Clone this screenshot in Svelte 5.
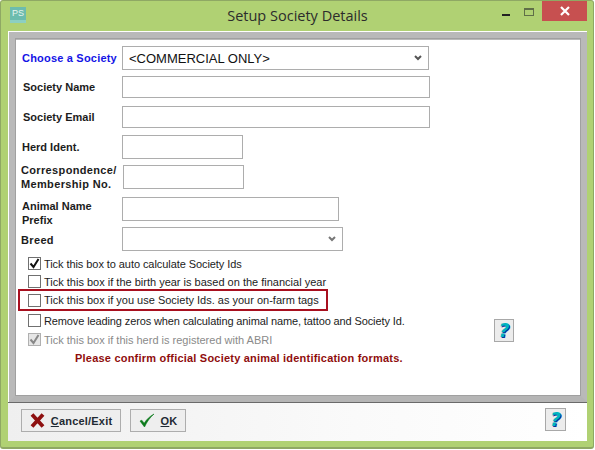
<script>
  // top = gap above the row, shift = nudge for the label, wide = letter spacing of long labels
  const rows = [
    { label: 'Society Name', width: 308, left: 0, top: 6, h: 22 },
    { label: 'Society Email', width: 308, left: 0, top: 8, h: 22, drop: -1 },
    { label: 'Herd Ident.', width: 121, left: 0, top: 7, h: 24, shift: -1 },
    { label: 'Correspondence/ Membership No.', width: 121, left: 1, top: 6, h: 24, shift: -2, wide: true },
    { label: 'Animal Name Prefix', width: 217, left: 0, top: 8, h: 24, shift: -1, drop: 8 }
  ];

  const checks = [
    { text: 'Tick this box to auto calculate Society Ids', on: true, tight: true },
    { text: 'Tick this box if the birth year is based on the financial year' },
    { text: 'Tick this box if you use Society Ids. as your on-farm tags', marked: true },
    { text: 'Remove leading zeros when calculating animal name, tattoo and Society Id.', snug: true },
    { text: 'Tick this box if this herd is registered with ABRI', on: true, off: true }
  ];
</script>

<div class="screen">
  <div class="window">
    <header class="titlebar">
      <div class="app-icon">PS</div>
      <div class="title">Setup Society Details</div>
      <div class="controls">
        <span class="min"></span>
        <span class="max"></span>
        <span class="close">
          <svg width="10" height="10" viewBox="0 0 10 10"><path d="M1 1l8 8M9 1l-8 8" stroke="#fff" stroke-width="2.2" fill="none" /></svg>
        </span>
      </div>
    </header>

    <div class="client">
      <main class="panel">
        <div class="row">
          <div class="label choose">Choose a Society</div>
          <div class="field select wide">
            <span>&lt;COMMERCIAL ONLY&gt;</span>
            <svg width="8" height="6" viewBox="0 0 8 6"><path d="M1 1l3 3 3-3" stroke="#555" stroke-width="2" fill="none" /></svg>
          </div>
        </div>

        {#each rows as r}
          <div class="row" style="margin-top: {r.top}px; height: {r.h}px">
            <div class="label" class:spaced={r.wide} style="margin-left: {r.shift ?? 0}px; margin-top: {r.drop ?? 0}px">{r.label}</div>
            <div class="field" style="width: {r.width}px; height: {r.h}px; margin-left: {r.left - (r.shift ?? 0)}px"></div>
          </div>
        {/each}

        <div class="row breed">
          <div class="label spaced breed-label">Breed</div>
          <div class="field select short">
            <span></span>
            <svg width="8" height="6" viewBox="0 0 8 6"><path d="M1 1l3 3 3-3" stroke="#777" stroke-width="2" fill="none" /></svg>
          </div>
        </div>

        <div class="lower">
          <div class="checks">
            {#each checks as c}
              <div class="check" class:marked={c.marked} class:off={c.off} class:snug={c.snug} class:tight={c.tight}>
                <span class="box">
                  {#if c.on}
                    <svg width="11" height="11" viewBox="0 0 11 11"><path d="M1.5 5.500l3 3.500 5-8" stroke={c.off ? '#888' : '#111'} stroke-width="2" fill="none" /></svg>
                  {/if}
                </span>
                <span>{c.text}</span>
              </div>
            {/each}
          </div>
          <div class="help panel-help">?</div>
        </div>

        <p class="notice">Please confirm official Society animal identification formats.</p>
      </main>

      <footer class="footer">
        <button class="btn cancel">
          <svg width="15" height="15" viewBox="0 0 15 15"><path d="M2 1.500l11 12M13 1.500l-11 12" stroke="#8e1010" stroke-width="3.800" fill="none" /></svg>
          <span><u>C</u>ancel/Exit</span>
        </button>
        <button class="btn ok">
          <svg width="16" height="15" viewBox="0 0 16 15"><path d="M1 8l1.800-.8 2.400 3C7.500 6.500 10.500 3.500 15 1 11 4.500 8 8.500 5.500 14z" fill="#0c7a1c" stroke="#0c7a1c" stroke-width="0.6" /></svg>
          <span><u>O</u>K</span>
        </button>
        <div class="help foot-help">?</div>
      </footer>
    </div>
  </div>
</div>

<style>
  :global(body) {
    margin: 0;
    background: #fff;
    overflow: hidden;
  }

  * {
    box-sizing: border-box;
  }

  .screen {
    width: 595px;
    height: 450px;
    font-family: "Liberation Sans", Arial, sans-serif;
  }

  .window {
    width: 594px;
    height: 449px;
    background: #b0d173;
    border: 1px solid #8fa864;
    border-bottom-width: 2px;
    border-radius: 3px;
    padding: 0 6px 6px 7px;
    display: flex;
    flex-direction: column;
  }

  .titlebar {
    height: 30px;
    flex: none;
    display: flex;
    align-items: flex-start;
    position: relative;
  }

  .app-icon {
    width: 16px;
    height: 16px;
    margin: 6px 0 0 2px;
    background: #6cbcae;
    color: #e6f4ee;
    font-size: 9px;
    line-height: 12px;
    text-align: center;
    border-bottom: 3px solid #8ccfc2;
  }

  .title {
    position: absolute;
    left: 0;
    right: 0;
    top: 5px;
    text-align: center;
    font-family: "Open Sans", sans-serif;
    font-size: 14.500px;
    line-height: 20px;
    color: #2c2c2c;
  }

  .controls {
    margin-left: auto;
    display: flex;
    align-items: flex-start;
    position: relative;
  }

  .min {
    width: 8px;
    height: 2px;
    background: #222;
    margin: 13px 14px 0 0;
  }

  .max {
    width: 10px;
    height: 8px;
    border: 1px solid #5f6f48;
    border-top-width: 2px;
    margin: 7px 8px 0 0;
  }

  .close {
    width: 45px;
    height: 20px;
    background: #c75050;
    display: flex;
    align-items: center;
    justify-content: center;
  }

  .client {
    flex: 1;
    min-height: 0;
    display: flex;
    flex-direction: column;
    background: #fff;
    border-top: 1px solid #fff;
  }

  .panel {
    height: 370px;
    flex: none;
    margin-left: 1px;
    background: #fff;
    border: 6px solid #b9b9b9;
    border-top-width: 8px;
    border-bottom-color: #b5b5b5;
    outline: 1px solid #a0a0a0;
    outline-offset: -7px;
    padding: 6px 8px 0 7px;
  }

  .row {
    display: flex;
    align-items: center;
  }

  .label {
    width: 100px;
    flex: none;
    padding-left: 1px;
    font-size: 11px;
    font-weight: 700;
    line-height: 14px;
    color: #1c1c1c;
  }

  .spaced {
    letter-spacing: 0.35px;
  }

  .choose {
    color: #1414e6;
    letter-spacing: 0.2px;
    margin-left: -1px;
    margin-right: 1px;
    margin-top: -1px;
    white-space: nowrap;
  }

  .field {
    background: #fff;
    border: 1px solid #adadad;
  }

  .select {
    height: 24px;
    display: flex;
    align-items: center;
    justify-content: space-between;
    padding: 0 6px 0 6px;
    font-size: 13px;
    color: #111;
  }

  .wide {
    width: 307px;
  }

  .short {
    width: 221px;
  }

  .breed {
    margin-top: 6px;
  }

  .breed-label {
    margin-left: -2px;
    margin-right: 2px;
    margin-top: 1px;
  }

  .lower {
    display: flex;
    margin-top: 6px;
  }

  .checks {
    width: 472px;
  }

  .check {
    display: flex;
    align-items: center;
    gap: 3px;
    height: 13px;
    margin: 0 0 5px 6px;
    font-size: 11px;
    color: #1c1c1c;
    white-space: nowrap;
  }

  .check.marked {
    height: 22px;
    width: 310px;
    margin: -4px 0 3px -4px;
    padding-left: 8px;
    border: 2px solid #a8101f;
  }

  .check.snug {
    letter-spacing: -0.12px;
    margin-bottom: 6px;
  }

  .check.tight {
    letter-spacing: -0.07px;
  }

  .check.off {
    color: #8a8a8a;
  }

  .box {
    width: 13px;
    height: 13px;
    flex: none;
    background: #fff;
    border: 1px solid #707070;
    display: flex;
    align-items: center;
    justify-content: center;
  }

  .off .box {
    background: #e6e6e6;
    border-color: #b0b0b0;
  }

  .help {
    width: 20px;
    height: 23px;
    flex: none;
    background: #ececec;
    border: 1px solid #a8a8a8;
    font-family: "DejaVu Sans", sans-serif;
    font-size: 19px;
    font-weight: 700;
    font-style: italic;
    line-height: 21px;
    text-align: center;
    color: #00b4c0;
    text-shadow: 1px 1px 0 #0a2f9a;
  }

  .panel-help {
    margin-top: 62px;
  }

  .notice {
    margin: 0 0 0 53px;
    font-size: 11px;
    font-weight: 700;
    letter-spacing: 0.21px;
    line-height: 14px;
    color: #8f0d0d;
  }

  .footer {
    flex: 1;
    min-height: 0;
    display: flex;
    align-items: flex-start;
    gap: 9px;
    padding: 6px 21px 0 13px;
    background: linear-gradient(to right, #efefef, #fafafa 60%, #fff);
    border-top: 1px solid #6a6a6a;
  }

  .btn {
    height: 23px;
    display: flex;
    align-items: center;
    justify-content: center;
    gap: 6px;
    padding: 0;
    background: #eeeeee;
    border: 1px solid #adadad;
    font-family: "Liberation Sans", Arial, sans-serif;
    font-size: 11px;
    font-weight: 700;
    letter-spacing: 0.2px;
    color: #1f2a33;
  }

  .cancel {
    width: 100px;
  }

  .ok {
    width: 56px;
  }

  .foot-help {
    margin-left: auto;
    margin-top: -1px;
    width: 21px;
  }
</style>
